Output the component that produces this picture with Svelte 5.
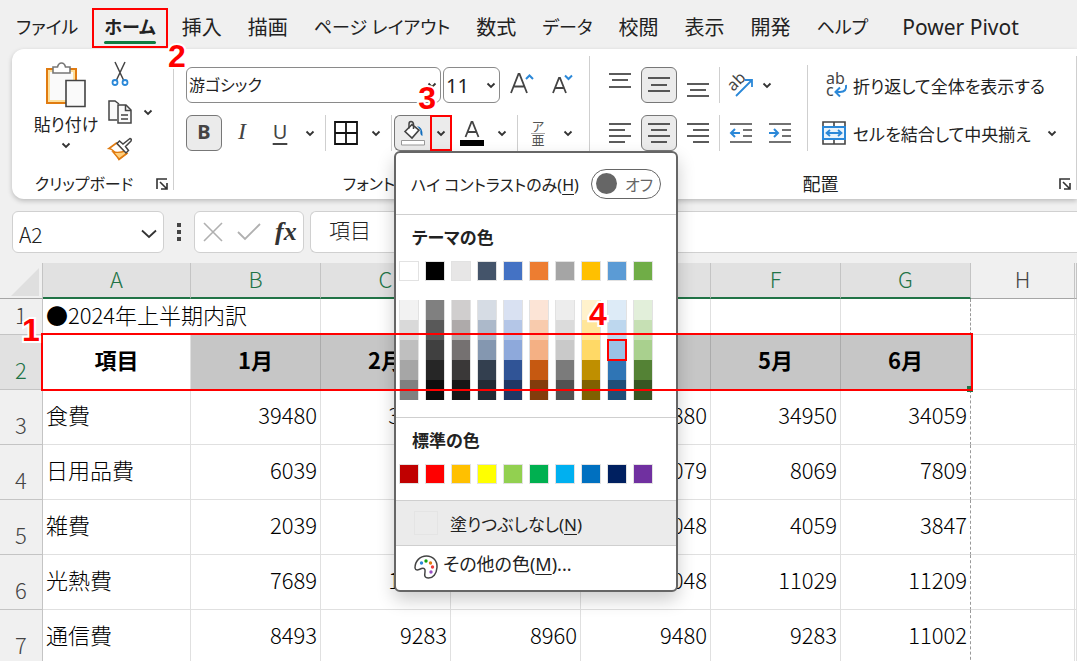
<script lang="ts">
	const tabs = [
		{ name: 'ファイル', kana: true },
		{ name: 'ホーム', kana: true },
		{ name: '挿入' },
		{ name: '描画' },
		{ name: 'ページ レイアウト', kana: true },
		{ name: '数式' },
		{ name: 'データ', kana: true },
		{ name: '校閲' },
		{ name: '表示' },
		{ name: '開発' },
		{ name: 'ヘルプ', kana: true },
		{ name: 'Power Pivot', addin: true }
	];

	const columns = ['A', 'B', 'C', 'D', 'E', 'F', 'G', 'H', ''];

	const rows = [
		['食費', 39480, 38540, 36720, 35880, 34950, 34059],
		['日用品費', 6039, 7049, 6820, 7079, 8069, 7809],
		['雑費', 2039, 3059, 4028, 5048, 4059, 3847],
		['光熱費', 7689, 10289, 9870, 11048, 11029, 11209],
		['通信費', 8493, 9283, 8960, 9480, 9283, 11002]
	];

	const themeColors = [
		'#ffffff', '#000000', '#e7e6e6', '#44546a', '#4472c4',
		'#ed7d31', '#a5a5a5', '#ffc000', '#5b9bd5', '#70ad47'
	];

	// one list per theme colour, light to dark
	const tints = [
		['#f2f2f2', '#d9d9d9', '#bfbfbf', '#a6a6a6', '#808080'],
		['#808080', '#595959', '#404040', '#262626', '#0d0d0d'],
		['#d0cece', '#aeaaaa', '#757171', '#3a3838', '#161616'],
		['#d6dce4', '#acb9ca', '#8497b0', '#333f4f', '#222b35'],
		['#d9e1f2', '#b4c6e7', '#8ea9db', '#305496', '#203764'],
		['#fce4d6', '#f8cbad', '#f4b084', '#c65911', '#833c0c'],
		['#ededed', '#dbdbdb', '#c9c9c9', '#7b7b7b', '#525252'],
		['#fff2cc', '#ffe699', '#ffd966', '#bf8f00', '#806000'],
		['#ddebf7', '#bdd7ee', '#9bc2e6', '#2f75b5', '#1f4e78'],
		['#e2efda', '#c6e0b4', '#a9d08e', '#548235', '#375623']
	];

	const standardColors = [
		'#c00000', '#ff0000', '#ffc000', '#ffff00', '#92d050',
		'#00b050', '#00b0f0', '#0070c0', '#002060', '#7030a0'
	];

	let activeTab = $state('ホーム');
	let highContrast = $state(false);
	let nameBox = $state('A2');
	let formula = $state('項目');
</script>

{#snippet chevron()}
	<svg class="chevron" width="10" height="7" viewBox="0 0 10 7">
		<path d="M1.5 1.5 5 5l3.500-3.500" fill="none" stroke="#333" stroke-width="1.800" />
	</svg>
{/snippet}

{#snippet lines(list: number[][])}
	<svg width="22" height="24" viewBox="0 0 22 24">
		{#each list as [x1, x2, y]}
			<path d="M{x1} {y}H{x2}" stroke="#333" stroke-width="1.600" />
		{/each}
	</svg>
{/snippet}

{#snippet launcher()}
	<button class="launcher" aria-label="詳細">
		<svg width="12" height="12" viewBox="0 0 12 12" fill="none" stroke="#333" stroke-width="1.600">
			<path d="M1 11V1h10M4 4l6.500 6.500M11 5v6H5" />
		</svg>
	</button>
{/snippet}

<div class="app">
	<nav class="tabs">
		{#each tabs as tab}
			<button
				class="tab"
				class:kana={tab.kana}
				class:addin={tab.addin}
				class:active={activeTab === tab.name}
				onclick={() => (activeTab = tab.name)}
			>
				{tab.name}
				{#if tab.name === 'ホーム'}
					<span class="mark tab-mark"></span>
					<span class="step step-two">2</span>
				{/if}
			</button>
		{/each}
	</nav>

	<div class="ribbon">
		<!-- Clipboard -->
		<section class="group clipboard">
			<div class="group-body">
				<button class="paste">
					<svg width="42" height="46" viewBox="0 0 42 46">
						<path d="M2 7h29v34H2z" fill="#fddf9b" stroke="#e07b10" stroke-width="2" />
						<path d="M5 10h23v28H5z" fill="#fafafa" />
						<path d="M8 11V5h4.500q1-4 4-4t4 4H25v6z" fill="#fff" stroke="#777" stroke-width="1.600" />
						<path d="M21 18.500h19v26H21z" fill="#fafafa" stroke="#444" stroke-width="1.600" />
					</svg>
					<span>貼り付け</span>
					{@render chevron()}
				</button>
				<div class="clip-tools">
					<button aria-label="切り取り">
						<svg width="24" height="26" viewBox="0 0 24 26" fill="none">
							<path d="M7 1l8.500 18M17 1 8.500 19" stroke="#444" stroke-width="1.500" />
							<circle cx="7" cy="21.500" r="2.500" stroke="#2b88d8" stroke-width="1.800" />
							<circle cx="17" cy="21.500" r="2.500" stroke="#2b88d8" stroke-width="1.800" />
						</svg>
					</button>
					<button class="with-menu" aria-label="コピー">
						<svg width="24" height="26" viewBox="0 0 24 26" fill="#fafafa" stroke="#444" stroke-width="1.500">
							<path d="M9 21H1V2h6l4 3" />
							<path d="M10 6h8l5 5v13H10z" />
							<path d="M17.500 6v5.500H23M13 16h7M13 20h7" fill="none" />
						</svg>
						{@render chevron()}
					</button>
					<button aria-label="書式のコピー/貼り付け">
						<svg width="24" height="24" viewBox="0 0 24 24">
							<path d="M8.500 6 1 11.500q5 .5 10 11l8-6z" fill="#fff" stroke="#e07b10" stroke-width="1.600" />
							<path d="M5 15q7 1 12-1l1.500 2.500L11 22z" fill="#ffcf7d" stroke="#e07b10" stroke-width="1.400" />
							<path d="m9 6.500 9 9.500 2.500-2.500-3-4L23 4q1-2-1-2.500L15 7l-3.500-3z" fill="#fff" stroke="#444" stroke-width="1.500" />
						</svg>
					</button>
				</div>
			</div>
			<footer><span>クリップボード</span>{@render launcher()}</footer>
		</section>

		<!-- Font -->
		<section class="group font">
			<div class="group-body rows">
				<div class="row">
					<div class="picker family">
						<select aria-label="フォント"><option>游ゴシック</option></select>
						{@render chevron()}
						<span class="step step-three">3</span>
					</div>
					<div class="picker size">
						<select aria-label="フォント サイズ"><option>11</option></select>
						{@render chevron()}
					</div>
					<button class="tool grow" aria-label="フォント サイズの拡大">
						<svg width="24" height="24" viewBox="0 0 24 24" fill="none" stroke="#444" stroke-width="1.800">
							<path d="M1 20 8.500 1h1L17 20M3.500 13.500h11" />
							<path d="m16 6 3.500-3.500L23 6" stroke="#2b88d8" stroke-width="2" />
						</svg>
					</button>
					<button class="tool" aria-label="フォント サイズの縮小">
						<svg width="24" height="24" viewBox="0 0 24 24" fill="none" stroke="#444" stroke-width="1.800">
							<path d="M3 20 9 5h1l6 15M5 15h9" />
							<path d="m15 2.500 3.500 3.500L22 2.500" stroke="#2b88d8" stroke-width="2" />
						</svg>
					</button>
				</div>
				<div class="row">
					<button class="tool letter pressed bold">B</button>
					<button class="tool letter italic">I</button>
					<button class="tool letter underline">U</button>
					<button class="arrow" aria-label="下線の種類">{@render chevron()}</button>
					<span class="divider"></span>
					<button class="tool" aria-label="罫線">
						<svg width="24" height="24" viewBox="0 0 24 24" fill="none" stroke="#111" stroke-width="1.800">
							<path d="M1 1h22v22H1zM12 1v22M1 12h22" />
						</svg>
					</button>
					<button class="arrow" aria-label="罫線の種類">{@render chevron()}</button>
					<span class="divider"></span>
					<div class="split">
						<button class="tool" aria-label="塗りつぶしの色">
							<svg width="26" height="26" viewBox="0 0 26 26" fill="none">
								<path d="m5 11.500 7-7 7 5.500-7 8z" fill="#fff" stroke="#444" stroke-width="1.600" />
								<path d="M9 8.500V4q0-2.500 2-2.500T13.500 4v5" stroke="#444" stroke-width="1.500" />
								<path d="M17 6q6 1 5.500 10-3-1-2-6z" fill="#0f6cbd" />
								<path d="M1.500 20.500h23v4.500h-23z" fill="#fff" stroke="#999" />
							</svg>
						</button>
						<button class="arrow open" aria-label="塗りつぶしの色の一覧">{@render chevron()}</button>

						<div class="menu">
							<label class="contrast">
								<span>ハイ コントラストのみ(<u>H</u>)</span>
								<span class="switch">
									<input type="checkbox" role="switch" bind:checked={highContrast} />
									<span class="switch-text">{highContrast ? 'オン' : 'オフ'}</span>
								</span>
							</label>
							<h2>テーマの色</h2>
							<div class="swatches">
								{#each themeColors as color}
									<button class="swatch" style:background={color} aria-label={color}></button>
								{/each}
							</div>
							<div class="swatches tints">
								{#each tints as shades, i}
									<div class="shades">
										{#each shades as color, j}
											<button
												style:background={color}
												class:chosen={i === 8 && j === 2}
												aria-label={color}
											></button>
										{/each}
									</div>
								{/each}
								<span class="step step-four">4</span>
							</div>
							<h2 class="ruled">標準の色</h2>
							<div class="swatches standard">
								{#each standardColors as color}
									<button class="swatch" style:background={color} aria-label={color}></button>
								{/each}
							</div>
							<button class="menu-item no-fill">
								<span class="empty"></span>
								<span>塗りつぶしなし(<u>N</u>)</span>
							</button>
							<button class="menu-item more">
								<svg width="24" height="24" viewBox="0 0 24 24">
									<path
										d="M1 13C1 6 6 1 12.500 1S23.500 6 23 12.500C22.500 19 19 23 14.500 23c-4.500 0-4-3-3.500-6 .5-3-1-4.500-3.500-3.500C4.500 15 1.500 16 1 13z"
										fill="#fff"
										stroke="#444"
										stroke-width="1.500"
									/>
									<circle cx="7.500" cy="8" r="1.700" fill="#2b88d8" />
									<circle cx="12" cy="6" r="1.700" fill="#13a10e" />
									<circle cx="16.500" cy="8" r="1.700" fill="#e07b10" />
									<circle cx="18.500" cy="12" r="1.700" fill="#f03a3a" />
									<circle cx="17" cy="17" r="1.700" fill="#9a4fc4" />
								</svg>
								<span>その他の色(<u>M</u>)...</span>
							</button>
						</div>
					</div>
					<button class="tool" aria-label="フォントの色">
						<svg width="26" height="26" viewBox="0 0 26 26">
							<path d="M6.500 17 12.500 2h1l6 15M8.500 12h9" fill="none" stroke="#444" stroke-width="1.800" />
							<path d="M1 20h24v6H1z" />
						</svg>
					</button>
					<button class="arrow" aria-label="フォントの色の一覧">{@render chevron()}</button>
					<span class="divider"></span>
					<button class="tool" aria-label="ふりがな">
						<span class="ruby"><span>ア</span><span>亜</span></span>
					</button>
					<button class="arrow" aria-label="ふりがなの設定">{@render chevron()}</button>
				</div>
			</div>
			<footer><span>フォント</span>{@render launcher()}</footer>
		</section>

		<!-- Alignment -->
		<section class="group alignment">
			<div class="group-body">
				<div class="rows">
					<div class="row">
						<button class="tool" aria-label="上揃え">{@render lines([[0, 22, 1], [3, 19, 7], [0, 22, 14]])}</button>
						<button class="tool pressed" aria-label="上下中央揃え">{@render lines([[0, 22, 5], [3, 19, 12], [0, 22, 18]])}</button>
						<button class="tool" aria-label="下揃え">{@render lines([[0, 22, 11], [3, 19, 17], [0, 22, 23]])}</button>
						<span class="divider"></span>
						<button class="with-menu orient" aria-label="方向">
							<svg width="26" height="26" viewBox="0 0 26 26">
								<text x="2" y="18" transform="rotate(-45 6 15)" font-size="16" fill="#444">ab</text>
								<path d="M8 24 23.500 8.500M17 8h7v7" fill="none" stroke="#2b88d8" stroke-width="1.800" />
							</svg>
							{@render chevron()}
						</button>
					</div>
					<div class="row">
						<button class="tool" aria-label="左揃え">{@render lines([[0, 22, 3], [0, 16, 9], [0, 22, 15], [0, 16, 21]])}</button>
						<button class="tool pressed" aria-label="中央揃え">{@render lines([[0, 22, 3], [3, 19, 9], [0, 22, 15], [3, 19, 21]])}</button>
						<button class="tool" aria-label="右揃え">{@render lines([[0, 22, 3], [6, 22, 9], [0, 22, 15], [6, 22, 21]])}</button>
						<span class="divider"></span>
						<button class="tool" aria-label="インデントを減らす">
							<svg width="22" height="24" viewBox="0 0 22 24" fill="none" stroke="#444" stroke-width="1.600">
								<path d="M0 3h22M13 9h9M13 15h9M0 21h22" />
								<path d="M10 12H1M5 8l-4 4 4 4" stroke="#2b88d8" stroke-width="2" />
							</svg>
						</button>
						<button class="tool" aria-label="インデントを増やす">
							<svg width="22" height="24" viewBox="0 0 22 24" fill="none" stroke="#444" stroke-width="1.600">
								<path d="M0 3h22M13 9h9M13 15h9M0 21h22" />
								<path d="M0 12h9M5 8l4 4-4 4" stroke="#2b88d8" stroke-width="2" />
							</svg>
						</button>
					</div>
				</div>
				<div class="rows wide">
					<button class="wide-tool">
						<svg width="26" height="26" viewBox="0 0 26 26">
							<text x="5" y="12" font-size="16" fill="#444">ab</text>
							<text x="5" y="24" font-size="16" fill="#444">c</text>
							<path d="M25 13q1 7-6 7h-4M19 15.500 14.500 20l4.500 4.500" fill="none" stroke="#2b88d8" stroke-width="2" />
						</svg>
						<span>折り返して全体を表示する</span>
					</button>
					<button class="wide-tool">
						<svg width="26" height="24" viewBox="0 0 26 24" fill="none" stroke="#444" stroke-width="1.600">
							<path d="M2 1h22v22H2zM13 1v5M13 18v5" />
							<path d="M2 6h22v12H2z" fill="#eaf4fc" stroke="#2b88d8" stroke-width="2" />
							<path d="M6 12h14M9 9l-3.500 3L9 15M17 9l3.500 3L17 15" stroke="#2b88d8" stroke-width="1.800" />
						</svg>
						<span>セルを結合して中央揃え</span>
						{@render chevron()}
					</button>
				</div>
			</div>
			<footer><span>配置</span>{@render launcher()}</footer>
		</section>
	</div>

	<div class="formula-bar">
		<div class="name-box">
			<input aria-label="名前ボックス" bind:value={nameBox} />
			<svg width="16" height="10" viewBox="0 0 16 10">
				<path d="m1 1.500 7 6.500 7-6.500" fill="none" stroke="#333" stroke-width="1.800" />
			</svg>
		</div>
		<svg class="dots" width="4" height="18" viewBox="0 0 4 18" fill="#444">
			<path d="M0 0h4v4H0zM0 7h4v4H0zM0 14h4v4H0z" />
		</svg>
		<div class="entry-buttons">
			<button aria-label="キャンセル">
				<svg width="20" height="20" viewBox="0 0 20 20">
					<path d="m1 1 18 18M19 1 1 19" stroke="#b0b0b0" stroke-width="1.600" />
				</svg>
			</button>
			<button aria-label="入力">
				<svg width="24" height="18" viewBox="0 0 24 18">
					<path d="m1 9 7 7L23 1" fill="none" stroke="#b0b0b0" stroke-width="1.800" />
				</svg>
			</button>
			<button class="fx">fx</button>
		</div>
		<input class="formula" aria-label="数式バー" bind:value={formula} />
	</div>

	<div class="sheet">
		<table>
			<colgroup>
				<col class="col-num" />
				<col class="col-a" />
				{#each 'BCDEFG' as _}<col class="col-month" />{/each}
				<col class="col-h" />
				<col />
			</colgroup>
			<thead>
				<tr>
					<th class="corner">
						<svg width="28" height="28" viewBox="0 0 28 28"><path d="M28 0v28H0z" fill="#dfdfdf" /></svg>
					</th>
					{#each columns as column, i}
						<th class:selected={i < 7}>{column}</th>
					{/each}
				</tr>
			</thead>
			<tbody>
				<tr class="title">
					<th>1</th>
					<td class="overflowing">●2024年上半期内訳</td>
					{#each columns.slice(1) as _, i}<td class:page-break={i === 5}></td>{/each}
				</tr>
				<tr class="heading">
					<th class="selected">2</th>
					<td>項目</td>
					{#each [1, 2, 3, 4, 5, 6] as month}<td class="shaded">{month}月</td>{/each}
					<td></td>
					<td></td>
				</tr>
				{#each rows as row, r}
					<tr>
						<th>{r + 3}</th>
						{#each row as value, i}
							<td class:number={i > 0} class:page-break={i === 6}>{value}</td>
						{/each}
						<td></td>
						<td></td>
					</tr>
				{/each}
			</tbody>
		</table>
		<span class="mark row-mark"></span>
		<span class="handle"></span>
		<span class="step step-one">1</span>
	</div>
</div>

<style>
	:global(body) {
		margin: 0;
		overflow: hidden;
	}

	.app {
		height: 100vh;
		overflow: hidden;
		background: #f0f0f0;
		color: #222;
		font-family: 'Noto Sans', 'Noto Sans CJK JP', sans-serif;
		font-size: 18px;
		font-feature-settings: 'palt';
	}

	.app * {
		box-sizing: border-box;
	}

	button,
	input,
	select {
		margin: 0;
		padding: 0;
		border: 0;
		background: none;
		color: inherit;
		font: inherit;
		font-feature-settings: inherit;
	}

	button {
		cursor: pointer;
		white-space: nowrap;
	}

	svg {
		display: block;
		flex: none;
		overflow: visible;
	}

	/* Tabs */
	.tabs {
		display: flex;
		gap: 26px;
		height: 49px;
		padding: 6px 16px 0;
		font-size: 20px;
	}

	.tab {
		position: relative;
		line-height: 43px;
	}

	.tab.kana {
		font-size: 18px;
	}

	.tab.addin {
		margin-left: 8px;
		font-size: 21px;
	}

	.tab.active {
		font-weight: 700;
	}

	.tab.active::after {
		content: '';
		position: absolute;
		inset: auto 0 5px;
		height: 3px;
		border-radius: 2px;
		background: #107c41;
	}

	/* Ribbon */
	.ribbon {
		display: flex;
		height: 150px;
		margin-left: 12px;
		border-radius: 12px 0 0 12px;
		background: #fff;
		box-shadow: 0 2px 5px rgb(0 0 0 / 22%);
	}

	.group {
		position: relative;
		display: flex;
		flex-direction: column;
		justify-content: space-between;
		padding: 0 12px;
	}

	.group::after {
		content: '';
		position: absolute;
		inset: 7px 0 9px auto;
		width: 1px;
		background: #cfcfcf;
	}

	.clipboard {
		flex: none;
		width: 162px;
	}

	.font {
		flex: none;
		width: 416px;
	}

	.alignment {
		flex: 1;
		min-width: 487px;
	}

	.group-body {
		display: flex;
	}

	footer {
		display: grid;
		height: 30px;
		align-items: center;
		line-height: 30px;
	}

	footer > :global(*) {
		grid-area: 1 / 1;
		justify-self: center;
	}

	footer .launcher {
		justify-self: end;
		margin-right: -6px;
	}

	.clipboard footer,
	.font footer {
		font-size: 16px;
	}

	.clipboard footer > span {
		margin-right: 18px;
	}

	.font footer > span,
	.alignment footer > span {
		margin-right: 26px;
	}

	.paste {
		display: flex;
		flex-direction: column;
		align-items: center;
		width: 84px;
		padding-top: 13px;
		font-size: 17px;
		line-height: 34px;
	}

	.clip-tools {
		display: flex;
		flex-direction: column;
		align-items: flex-start;
		gap: 12px;
		padding-top: 12px;
	}

	.with-menu {
		display: flex;
		align-items: center;
		gap: 11px;
	}

	.rows {
		display: flex;
		flex-direction: column;
		gap: 12px;
		padding-top: 18px;
	}

	.row {
		display: flex;
		align-items: center;
		gap: 2px;
		height: 36px;
	}

	.alignment .row {
		gap: 3px;
	}

	.tool {
		display: flex;
		flex: none;
		align-items: center;
		justify-content: center;
		width: 36px;
		height: 36px;
		border-radius: 6px;
	}

	.pressed {
		border: 1px solid #777;
		background: #ebebeb;
	}

	.grow {
		margin-left: 2px;
		margin-right: 2px;
	}

	.arrow {
		display: flex;
		align-items: center;
		justify-content: center;
		width: 20px;
		height: 36px;
	}

	.divider {
		width: 1px;
		height: 36px;
		margin-left: 3px;
		background: #cfcfcf;
	}

	.alignment .divider {
		margin: 0;
	}

	.letter {
		padding-bottom: 3px;
		color: #444;
		font-size: 20px;
	}

	.bold {
		font-weight: 700;
	}

	.italic {
		font-family: 'Liberation Serif', serif;
		font-size: 24px;
		font-style: italic;
	}

	.underline {
		text-decoration: underline;
		text-underline-offset: 4px;
	}

	.picker {
		position: relative;
		display: grid;
		flex: none;
		align-items: center;
		height: 36px;
		border: 1px solid #8a8a8a;
		border-radius: 6px;
	}

	.picker > :global(*) {
		grid-area: 1 / 1;
	}

	.picker > :global(.chevron) {
		justify-self: end;
		margin-right: 3px;
		pointer-events: none;
	}

	.picker select {
		height: 34px;
		padding-left: 2px;
		appearance: none;
	}

	.family {
		width: 255px;
	}

	.family select {
		font-size: 16px;
	}

	.size {
		width: 57px;
	}

	.size select {
		font-size: 20px;
	}

	.split {
		position: relative;
		display: flex;
	}

	.split > .tool {
		border: 1px solid #777;
		border-right: 0;
		border-radius: 6px 0 0 6px;
		background: #ebebeb;
	}

	.open {
		width: 22px;
		border: 2px solid #f00;
		background: #ebebeb;
	}

	.ruby {
		display: flex;
		flex-direction: column;
		color: #555;
		font-size: 13px;
		line-height: 13px;
	}

	.ruby span + span {
		border-top: 1px solid #aaa;
	}

	.orient {
		padding: 5px;
		gap: 8px;
	}

	.wide {
		margin-left: 9px;
		padding-left: 14px;
		background: linear-gradient(#cfcfcf, #cfcfcf) 0 16px / 1px 93px no-repeat;
	}

	.wide-tool {
		display: flex;
		align-items: center;
		gap: 6px;
		height: 36px;
		font-size: 17px;
	}

	.wide-tool > :global(.chevron) {
		margin-left: 10px;
	}

	/* Fill colour menu */
	.menu {
		position: absolute;
		top: 36px;
		left: 0;
		z-index: 10;
		width: 284px;
		border: 2px solid #666;
		border-radius: 6px;
		background: #fff;
		box-shadow: 0 8px 18px rgb(0 0 0 / 20%);
	}

	.contrast {
		display: flex;
		align-items: center;
		justify-content: space-between;
		height: 62px;
		padding: 0 15px;
		border-bottom: 1px solid #cfcfcf;
		font-size: 16px;
		white-space: nowrap;
	}

	.switch {
		display: grid;
		align-items: center;
	}

	.switch > * {
		grid-area: 1 / 1;
	}

	.switch input {
		display: flex;
		align-items: center;
		width: 70px;
		height: 30px;
		padding: 0 4px;
		border: 1px solid #666;
		border-radius: 15px;
		appearance: none;
	}

	.switch input::before {
		content: '';
		width: 21px;
		height: 21px;
		border-radius: 50%;
		background: #666;
	}

	.switch-text {
		justify-self: end;
		margin-right: 8px;
		color: #666;
	}

	h2 {
		margin: 0;
		padding-left: 16px;
		font-size: 17px;
		font-weight: 700;
		line-height: 46px;
	}

	.swatches {
		display: flex;
		gap: 6px;
		padding-left: 3px;
	}

	.swatch {
		width: 20px;
		height: 20px;
		border: 1px solid #e2e2e2;
	}

	.tints {
		position: relative;
		padding-top: 19px;
		padding-bottom: 17px;
	}

	.shades {
		display: flex;
		flex-direction: column;
		width: 20px;
		border: 0 solid #e2e2e2;
		border-width: 0 1px;
	}

	.shades button {
		height: 20px;
	}

	.shades .chosen {
		z-index: 1;
		outline: 2px solid #f00;
		outline-offset: -1px;
	}

	.ruled {
		border-top: 1px solid #cfcfcf;
	}

	.standard {
		padding-bottom: 16px;
	}

	.menu-item {
		display: flex;
		align-items: center;
		width: 100%;
		height: 45px;
		padding-left: 18px;
		border-top: 1px solid #cfcfcf;
	}

	.no-fill {
		gap: 12px;
		background: #ebebeb;
		font-size: 17px;
	}

	.empty {
		width: 24px;
		height: 24px;
		border: 1px solid #e4e4e4;
	}

	.more {
		gap: 5px;
		padding-bottom: 2px;
	}

	.more span {
		padding-bottom: 8px;
	}

	u {
		text-underline-offset: 3px;
	}

	/* Formula bar */
	.formula-bar {
		display: flex;
		align-items: center;
		height: 42px;
		margin: 12px 0 10px 12px;
		font-family: 'Noto Sans CJK JP', sans-serif;
		font-size: 21px;
		font-weight: 300;
	}

	.name-box,
	.entry-buttons,
	.formula {
		height: 42px;
		border: 1px solid #d0d0d0;
		border-radius: 6px;
		background: #fff;
	}

	.name-box {
		display: flex;
		align-items: center;
		width: 152px;
		padding: 3px 6px 0;
	}

	.name-box input {
		flex: 1;
		min-width: 0;
	}

	.dots {
		margin: 0 13px;
	}

	.entry-buttons {
		display: flex;
		align-items: center;
		gap: 14px;
		width: 110px;
		padding: 0 8px;
	}

	.fx {
		color: #333;
		font-family: 'Liberation Serif', serif;
		font-size: 26px;
		font-style: italic;
		font-weight: 700;
		line-height: 32px;
	}

	.formula {
		flex: 1;
		min-width: 0;
		margin-left: 6px;
		padding: 0 18px 6px;
		border-right: 0;
		border-radius: 6px 0 0 6px;
	}

	/* Sheet */
	.sheet {
		position: relative;
		font-family: 'Noto Sans CJK JP', sans-serif;
		font-size: 22px;
		font-feature-settings: normal;
	}

	table {
		width: 100%;
		min-width: 1077px;
		border-spacing: 0;
		table-layout: fixed;
		background: #fff;
		color: #000;
	}

	.col-num {
		width: 43px;
	}

	.col-a {
		width: 148px;
	}

	.col-month {
		width: 130px;
	}

	.col-h {
		width: 104px;
	}

	th,
	td {
		height: 55px;
		padding: 0 3px 6px;
		border: 0 solid #e0e0e0;
		border-width: 0 1px 1px 0;
		font-weight: 300;
		line-height: 28px;
		white-space: nowrap;
	}

	th {
		border-color: #c4c4c4;
		background: #f0f0f0;
		color: #444;
	}

	thead th {
		height: 36px;
		border-bottom-color: #a6a6a6;
	}

	thead .corner {
		padding: 4px 3px 2px;
	}

	tbody th {
		vertical-align: bottom;
	}

	th.selected {
		background: #e1e1e1;
		color: #217346;
	}

	thead th.selected {
		padding-bottom: 5px;
		border-bottom: 2px solid #217346;
	}

	.corner svg {
		margin-left: auto;
	}

	.title > * {
		height: 36px;
	}

	.title .overflowing {
		overflow: visible;
		border-right-color: #fff;
	}

	.heading td {
		font-weight: 700;
		text-align: center;
	}

	.heading .shaded {
		border-right-color: #ababab;
		background: #c6c6c6;
	}

	.number {
		text-align: right;
	}

	.page-break {
		border-right: 1px dashed #999;
	}

	/* Numbered steps drawn over the window */
	.mark {
		position: absolute;
		border: 2px solid #f00;
		pointer-events: none;
	}

	.tab-mark {
		inset: 2px -12px 1px;
	}

	.row-mark {
		top: 70px;
		left: 41px;
		z-index: 20;
		width: 932px;
		height: 58px;
	}

	.handle {
		position: absolute;
		top: 123px;
		left: 967px;
		width: 6px;
		height: 6px;
		background: #217346;
	}

	.step {
		position: absolute;
		z-index: 30;
		color: #f00;
		font-family: 'Liberation Sans', sans-serif;
		font-size: 32px;
		font-weight: 700;
		line-height: 32px;
		paint-order: stroke;
		-webkit-text-stroke: 4px #fff;
	}

	.step-one {
		top: 51px;
		left: 22px;
	}

	.step-two {
		top: 34px;
		right: -30px;
	}

	.step-three {
		top: 14px;
		right: 4px;
	}

	.step-four {
		top: 17px;
		left: 193px;
	}
</style>
